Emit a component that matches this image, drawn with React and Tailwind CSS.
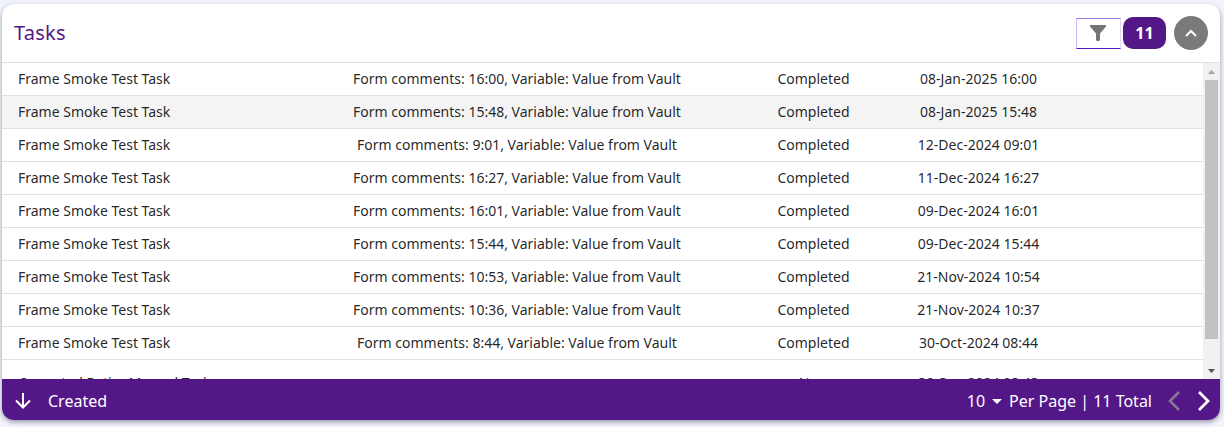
const rows = [
  ['Frame Smoke Test Task', 'Form comments: 16:00, Variable: Value from Vault', 'Completed', '08-Jan-2025 16:00'],
  ['Frame Smoke Test Task', 'Form comments: 15:48, Variable: Value from Vault', 'Completed', '08-Jan-2025 15:48'],
  ['Frame Smoke Test Task', 'Form comments: 9:01, Variable: Value from Vault', 'Completed', '12-Dec-2024 09:01'],
  ['Frame Smoke Test Task', 'Form comments: 16:27, Variable: Value from Vault', 'Completed', '11-Dec-2024 16:27'],
  ['Frame Smoke Test Task', 'Form comments: 16:01, Variable: Value from Vault', 'Completed', '09-Dec-2024 16:01'],
  ['Frame Smoke Test Task', 'Form comments: 15:44, Variable: Value from Vault', 'Completed', '09-Dec-2024 15:44'],
  ['Frame Smoke Test Task', 'Form comments: 10:53, Variable: Value from Vault', 'Completed', '21-Nov-2024 10:54'],
  ['Frame Smoke Test Task', 'Form comments: 10:36, Variable: Value from Vault', 'Completed', '21-Nov-2024 10:37'],
  ['Frame Smoke Test Task', 'Form comments: 8:44, Variable: Value from Vault', 'Completed', '30-Oct-2024 08:44'],
];

function Row({ cells, highlighted, last }) {
  return (
    <div
      className={`grid shrink-0 grid-cols-[338px_354px_239px_91px_1fr] items-center border-b border-[#e0e0e0] text-[14px] leading-5 whitespace-nowrap text-black/87 ${last ? 'h-[47px]' : 'h-[33px]'} ${highlighted ? 'bg-[#f4f4f4]' : 'bg-white'}`}
    >
      <div className="pl-4">{cells[0]}</div>
      <div className="text-center">{cells[1]}</div>
      <div className="text-center">{cells[2]}</div>
      <div className="flex justify-center">{cells[3]}</div>
    </div>
  );
}

function Header() {
  return (
    <header className="flex h-[59px] shrink-0 items-center border-b border-[#e0e0e0] pr-3 pl-3">
      <h1 className="flex-1 text-[20px] leading-7 tracking-[0.25px] text-[#541788]">Tasks</h1>
      <button className="mr-[2px] flex h-[31px] w-[45px] items-center border border-t-[#a17fe8] border-r-[#e3d5fb] border-b-[#5a17c4] border-l-[#cdb9f5] pl-[13px]">
        <svg viewBox="0 0 16 16" className="h-4 w-4 fill-[#757575]">
          <path d="M0 0H16V1.5L10 8.5V15L9 16H7L6 15V8.5L0 1.5Z" />
        </svg>
      </button>
      <div className="mr-2 flex h-8 w-[43px] items-center justify-center rounded-[10px] bg-[#541788] text-[16px] font-bold text-white">
        11
      </div>
      <button className="flex h-[34px] w-[34px] items-center justify-center rounded-full bg-[#7a7a7a]">
        <svg viewBox="0 0 12 8" className="h-2 w-3 fill-none stroke-white stroke-2">
          <path d="M1 7L6 2L11 7" />
        </svg>
      </button>
    </header>
  );
}

function Scrollbar() {
  return (
    <div className="flex w-[17px] shrink-0 flex-col items-center bg-[#f1f1f1]">
      <div className="flex h-[17px] items-center justify-center">
        <svg viewBox="0 0 7 4" className="h-1 w-[7px] fill-[#a3a3a3]">
          <path d="M0 4L3.5 0L7 4Z" />
        </svg>
      </div>
      <div className="h-[259px] w-[13px] bg-[#c1c1c1]" />
      <div className="flex-1" />
      <div className="flex h-[17px] items-center justify-center">
        <svg viewBox="0 0 7 4" className="h-1 w-[7px] fill-[#505050]">
          <path d="M0 0L3.5 4L7 0Z" />
        </svg>
      </div>
    </div>
  );
}

function Footer() {
  return (
    <footer className="flex h-[41px] shrink-0 items-center bg-[#541788] pt-[2px] pr-[10px] pl-[13px] text-[16px] leading-6 text-white">
      <svg viewBox="0 0 16 16" className="h-4 w-4 fill-none stroke-white stroke-2">
        <path d="M8 0V14.5M1 7.5L8 14.5L15 7.5" />
      </svg>
      <span className="ml-[17px] flex-1">Created</span>
      <span>10</span>
      <svg viewBox="0 0 10 5" className="mt-[2px] mr-[7px] ml-[7px] h-[5px] w-[10px] fill-white">
        <path d="M0 0H10L5 5Z" />
      </svg>
      <span>Per Page | 11 Total</span>
      <svg viewBox="0 0 12 20" className="ml-4 h-5 w-3 fill-none stroke-[#857a8d] stroke-[2.5]">
        <path d="M11 1L2 10L11 19" />
      </svg>
      <svg viewBox="0 0 12 20" className="ml-[18px] h-5 w-3 fill-none stroke-white stroke-[2.8]">
        <path d="M1 1L10 10L1 19" />
      </svg>
    </footer>
  );
}

export default function App() {
  return (
    <main className="h-[427px] w-[1224px] bg-[#f2f4fd] pt-1 pl-[2px] font-['Noto_Sans',sans-serif]">
      <section className="flex h-[416px] w-[1218px] flex-col overflow-hidden rounded-[12px] bg-white shadow-[0_2px_5px_rgba(60,60,80,0.5)]">
        <Header />
        <div className="flex min-h-0 flex-1">
          <div className="flex flex-1 flex-col overflow-hidden">
            {rows.map((cells, i) => (
              <Row key={i} cells={cells} highlighted={i === 1} />
            ))}
            <Row cells={['Corrected Retire Manual Task', '', 'New', '30-Sep-2024 08:43']} last />
          </div>
          <Scrollbar />
        </div>
        <Footer />
      </section>
    </main>
  );
}
